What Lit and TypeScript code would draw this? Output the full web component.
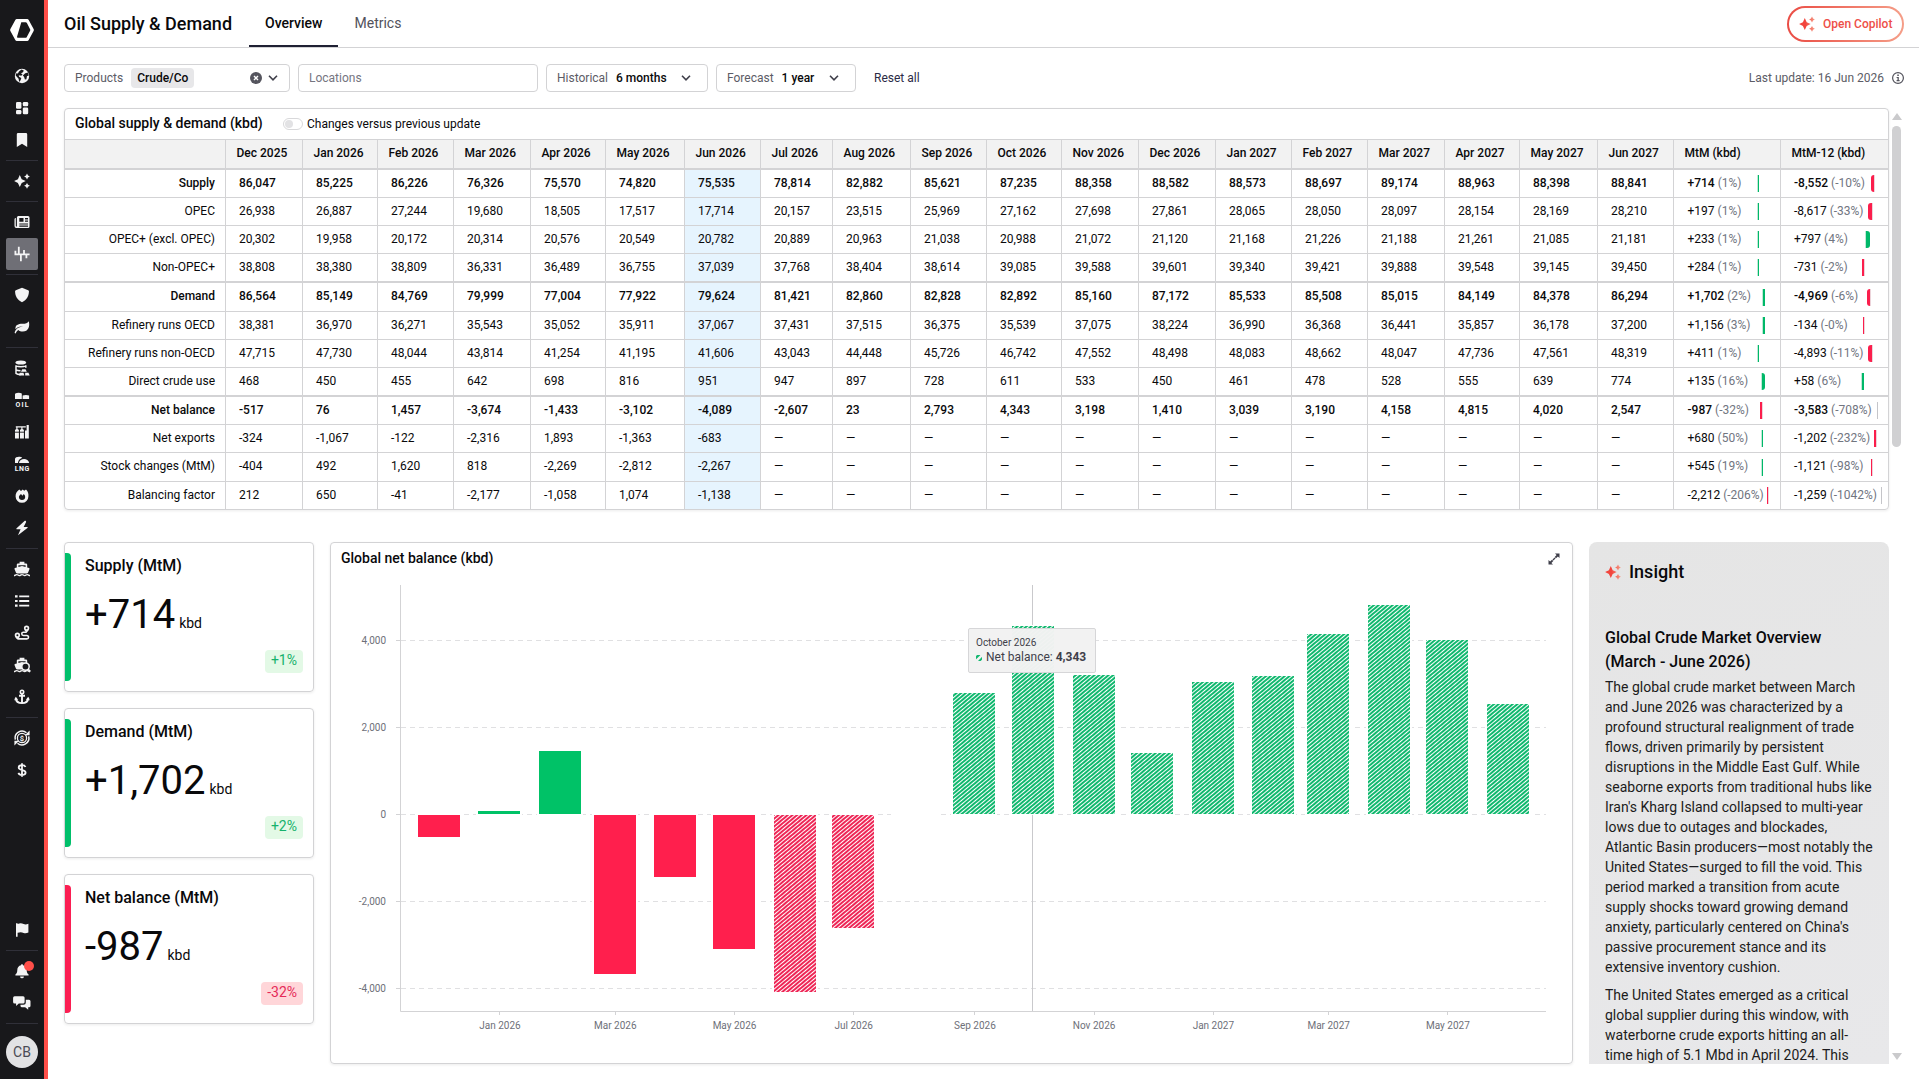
import { LitElement, html, css, svg, nothing, TemplateResult } from "lit";
import { customElement, property } from "lit/decorators.js";
import { classMap } from "lit/directives/class-map.js";
import { styleMap } from "lit/directives/style-map.js";

const SPARKLES = svg`
  <path d="M5.800 2.100 7.700 6.200 11.700 8.100 7.700 10 5.800 14.100 3.900 10 .1 8.100 3.900 6.200Z"/>
  <path d="M13 .6 14 2.500 15.900 3.500 14 4.500 13 6.400 12 4.500 10.100 3.500 12 2.500Z"/>
  <path d="M13 9.900 14 11.800 15.900 12.800 14 13.800 13 15.700 12 13.800 10.100 12.800 12 11.800Z"/>`;

const SHIP = svg`
  <path d="M5.6.8h4.8v1.6H12a1.2 1.2 0 0 1 1.2 1.2v2.8l1.9.7c.4.2.5.5.4.9l-1.4 3.4c-.3.7-.8 1.1-1.5 1.1H3.4c-.7 0-1.2-.4-1.5-1.1L.5 8c-.1-.4 0-.7.4-.9l1.9-.7V3.6A1.2 1.2 0 0 1 4 2.4h1.6Z"/>
  <path d="M4.4 4.2h7.2v1.7L8 4.9 4.4 5.9Z" fill="#18181b"/>
  <path d="M0 14.6c1.3 0 1.3-1 2.7-1s1.300 1 2.6 1 1.300-1 2.700-1 1.300 1 2.700 1 1.300-1 2.600-1 1.400 1 2.700 1" fill="none" stroke="currentColor" stroke-width="1.300"/>`;

const ICONS: Record<string, TemplateResult> = {
  sparkles: svg`${SPARKLES}`,
  globe: svg`<circle cx="8" cy="8" r="7.200"/><path fill="#18181b" d="M7.500 1.600 9.800 2.400 9 4.300 7 5.200 8.600 6.500 7.200 7.700 4.800 7.200 5 8.800 7.300 10 6.600 12.200 5.200 14 4.600 10.800 1.700 7.600 2.300 5.200 3.900 5.600 5 3.400ZM11.200 5.300l2.900-.8.6 3.300-1.700.2-.6 3.300-1.500.3-.9-2.800-1.200-1.300Z"/>`,
  grid: svg`<rect x="2" y="2" width="5.400" height="6.800" rx="1.300"/><rect x="2" y="10" width="5.400" height="4.200" rx="1.300"/><rect x="8.800" y="2" width="5.400" height="4.200" rx="1.300"/><rect x="8.800" y="7.400" width="5.400" height="6.800" rx="1.300"/>`,
  bookmark: svg`<path d="M2.800 2.200A1.300 1.300 0 0 1 4.100.9h7.800a1.300 1.300 0 0 1 1.300 1.300v12.900L8 11.800l-5.200 3.300Z"/>`,
  news: svg`<path fill-rule="evenodd" d="M4.800 2h9.200a1.500 1.500 0 0 1 1.500 1.500v9a1.500 1.500 0 0 1-1.500 1.500H2.400A1.900 1.900 0 0 1 .5 12.100V5.400c0-.8.500-1.400 1.300-1.400v8c0 .800 1.100.800 1.100 0V3.500C2.900 2.600 3.700 2 4.800 2Zm.5 2.100v3.700h4.200V4.100Zm5.700 0v1.300h3V4.100Zm0 2.500v1.200h3V6.600ZM5.300 9.400v1.200H14V9.400Zm0 2.200v1.100H14v-1.100Z"/>`,
  balance: svg`<path d="M1 8.400h14.600M1.400 4.800v4.400M4.800.8v8.400M6.900 8.400v6.800M10 4v4.400M12.400 8.400v3.900" fill="none" stroke="currentColor" stroke-width="1.800"/>`,
  shield: svg`<path d="M8 .8 14.200 3.200c.5.200.7.500.7 1C14.900 9 12.700 13 8 15.200 3.300 13 1.100 9 1.100 4.200c0-.5.200-.8.700-1Z"/>`,
  leaf: svg`<path d="M14.800 2.200c1.300 5-.3 10.300-6 10.300-1.900 0-3.400-.6-4.500-1.600-1.300 1-2.100 2-2.600 3.600L.6 14c.7-3.300 3.300-6 8.600-6.400C5.500 7 2.900 8.600 1.500 10.300 1 5.900 4.200 4.900 8.300 4.800 12 4.700 13.300 4 14.800 2.200Z"/>`,
  barrel: svg`<ellipse cx="6.800" cy="2.600" rx="5.300" ry="2"/><path d="M2 5.200v8.200c1 .9 3 1.300 5 1.200M11.800 5.200v2.600M2 5.900c2.500 1.200 7.400 1.200 9.800 0M2 9.900c1.200.7 3 .9 4.500.9" fill="none" stroke="currentColor" stroke-width="1.500"/><path d="M8.200 9.200h3.300l1.300 2.600H7ZM5.700 12.700h3.800l.8 2.700H4.800ZM11.200 12.700h3.200l1.300 2.700h-4.500Z"/>`,
  oil: svg`<path d="M1 1.800C3 .6 6 .6 7.800 1.600V7H1ZM8.600 3.600c2-.8 4.800-.8 6.500 0V7H8.600Z"/><text x="8" y="15" text-anchor="middle" font-size="7" font-weight="700" textLength="13">OIL</text>`,
  refinery: svg`<path d="M1 5.900c1-1.300 3-1.300 3.900 0v8.600H1ZM6 5.900c1-1.300 3-1.300 3.900 0v8.600H6ZM11 6.400h1.600V1.100h2.200v13.400H11Z"/><path d="M1.800 2.900h10M2.900 2.900v3M7.900 2.900v3" fill="none" stroke="currentColor" stroke-width="1.200"/><path d="M1 8.200h9.500" stroke="#18181b" stroke-width=".9"/>`,
  lng: svg`<path d="M1 7V3c0-2.500 5.500-3 7.200-1.300C5.500 2.800 4.200 4.500 4 7ZM5 7c.7-5.200 9.200-5.500 10.200 0Z"/><text x="8" y="15" text-anchor="middle" font-size="7" font-weight="700" textLength="14.500">LNG</text>`,
  flame: svg`<path fill-rule="evenodd" d="M5.300 1.600 7 3 8.700 1.500l1.500 1.300L12 1.600c2.100 2 2.700 4.500 2.400 6.900A6.400 6.400 0 0 1 8 14.800 6.400 6.400 0 0 1 1.600 8.500C1.400 5.800 2.900 3.400 5.300 1.600ZM8 12c1.900 0 3.200-1.200 3.200-3 0-1.200-.6-2.200-1.400-3L8.400 7.700 7 6C5.900 6.800 4.900 7.900 4.900 9c0 1.800 1.300 3 3.100 3Z"/>`,
  bolt: svg`<path d="M10.800.8 2.600 8.200c-.5.500-.2 1 .4 1h3.600L4 15.200l9.400-7.200c.5-.5.3-1.100-.4-1.100H9.600l2.500-4.800C12.400 1.200 11.500.4 10.800.8Z"/>`,
  ship: SHIP,
  list: svg`<path d="M1 2.200h2.600v2.200H1ZM1 6.900h2.600v2.200H1ZM1 11.600h2.600v2.200H1ZM5.200 2.400h10v1.800h-10ZM5.200 7.100h10v1.800h-10ZM5.200 11.800h10v1.800h-10Z"/>`,
  route: svg`<path fill-rule="evenodd" d="M12.600.6a2.700 2.700 0 0 1 2.700 2.700c0 1.500-1.600 3.400-2.700 4.400-1.100-1-2.700-2.900-2.700-4.400A2.700 2.700 0 0 1 12.600.6Zm0 1.700a1 1 0 1 0 0 2 1 1 0 0 0 0-2ZM3.400 7.500a2.700 2.700 0 0 1 2.700 2.700c0 1.500-1.600 3.400-2.700 4.400-1.100-1-2.700-2.900-2.700-4.400a2.700 2.700 0 0 1 2.700-2.700Zm0 1.700a1 1 0 1 0 0 2 1 1 0 0 0 0-2Z"/><path d="M12.600 7.200H9.400a1.600 1.600 0 0 0 0 3.300h3.400a1.700 1.700 0 0 1 0 3.400H3.600" fill="none" stroke="currentColor" stroke-width="1.600"/>`,
  shipsearch: svg`${SHIP}<circle cx="11.500" cy="9.600" r="3.700" fill="#18181b" stroke="currentColor" stroke-width="1.500"/><path d="m14 12.200 2.300 2.500" stroke="currentColor" stroke-width="1.800"/>`,
  anchor: svg`<path d="M8 4.800v9.700M5 6.700h6M1.700 8.800c.3 3.500 2.800 5.300 6.300 5.300s6-1.800 6.300-5.300" fill="none" stroke="currentColor" stroke-width="1.900"/><circle cx="8" cy="2.900" r="1.700" fill="none" stroke="currentColor" stroke-width="1.600"/><path d="M.2 11.200 1.700 7.800 4.200 10.700ZM15.800 11.200 14.300 7.800 11.800 10.700Z"/>`,
  exchange: svg`<circle cx="8" cy="8" r="4.600" fill="none" stroke="currentColor" stroke-width="1.300"/><path d="M1.300 9.600A6.900 6.900 0 0 1 12.500 2.800M14.700 6.400A6.900 6.900 0 0 1 3.500 13.200" fill="none" stroke="currentColor" stroke-width="1.500"/><path d="M15.600.6v4.600h-4.700ZM.4 15.400v-4.600h4.700Z"/><text x="8" y="10.700" text-anchor="middle" font-size="7.500" font-weight="700">$</text>`,
  dollar: svg`<path d="M8 1.200v13.600M11.500 5C11 3.800 9.800 3.200 8.100 3.200c-2 0-3.400.9-3.400 2.400 0 3.600 6.900 1.400 6.900 5 0 1.500-1.500 2.400-3.500 2.400-1.900 0-3.200-.8-3.700-2.100" fill="none" stroke="currentColor" stroke-width="1.800"/>`,
  flag: svg`<path d="M2 1.200h1.600V2c2.700-1 4.200-.7 6 .1 1.600.7 3 .5 4.800-.4v8.800c-1.800.9-3.200 1.100-4.800.4-1.800-.8-3.300-1.100-6-.1v4H2Z"/>`,
  bell: svg`<path d="M8 1.200c.6 0 1 .4 1 1 2.300.5 3.700 2.300 3.700 4.700 0 2.400.6 3.500 1.900 4.600v1H1.400v-1c1.300-1.100 1.900-2.200 1.900-4.600C3.300 4.500 4.700 2.700 7 2.200c0-.6.4-1 1-1ZM6.100 13.400h3.800a1.900 1.900 0 0 1-3.800 0Z"/>`,
  chat: svg`<path d="M.6 1.200h8.500a1.500 1.500 0 0 1 1.500 1.500V7a1.500 1.500 0 0 1-1.500 1.500H4.800L2.100 11V8.500H.6A1.500 1.500 0 0 1-.9 7V2.700A1.500 1.500 0 0 1 .6 1.200Z"/><path d="M11.800 4.700H15a1.500 1.500 0 0 1 1.500 1.500v4.600a1.500 1.500 0 0 1-1.500 1.500h-.8v2.500l-3-2.500H8a1.500 1.500 0 0 1-1.500-1.500V9.800h2.800a2.500 2.500 0 0 0 2.500-2.500Z"/>`,
};

@customElement("nav-icon")
class NavIcon extends LitElement {
  @property() name = "";
  @property({ type: Boolean, reflect: true }) active = false;
  @property({ type: Boolean }) badge = false;

  static styles = css`
    :host { display: flex; width: 32px; height: 32px; align-items: center; justify-content: center; position: relative; color: #f4f4f5; border-radius: 2px; }
    :host([active]) { background: #6f6f76; }
    svg { width: 16px; height: 16px; fill: currentColor; overflow: visible; font-family: Roboto, sans-serif; }
    .dot { position: absolute; left: 18px; top: 6px; width: 10px; height: 10px; border-radius: 50%; background: #ff4f49; }
  `;

  render() {
    return html`<svg viewBox="0 0 16 16">${ICONS[this.name]}</svg>${this.badge ? html`<i class="dot"></i>` : nothing}`;
  }
}

@customElement("side-nav")
class SideNav extends LitElement {
  static styles = css`
    :host { display: flex; flex-direction: column; align-items: center; width: 44px; height: 1079px; background: #18181b; border-right: 4px solid #ff4f49; flex: none; font-family: Roboto, sans-serif; }
    .logo { width: 24px; height: 22px; margin: 19px 0 19px; }
    .sep { width: 32px; height: 1px; margin: 4px 0; background: #303039; flex: none; }
    .space { flex: 1; }
    .avatar { width: 32px; height: 32px; border-radius: 50%; background: #e2e2e4; color: #4b4b55; font-size: 14px; line-height: 32px; text-align: center; margin: 8px 0 11px; }
  `;

  render() {
    const groups = [
      ["globe", "grid", "bookmark"],
      ["sparkles"],
      ["news", "balance"],
      ["shield", "leaf"],
      ["barrel", "oil", "refinery", "lng", "flame", "bolt"],
      ["ship", "list", "route", "shipsearch", "anchor"],
      ["exchange", "dollar"],
    ];
    return html`
      <svg class="logo" viewBox="0 0 24 22">
        <path d="M6.800 0h10.400a1.800 1.800 0 0 1 1.500.9l4.900 9.200a1.800 1.800 0 0 1 0 1.800l-4.900 9.200a1.800 1.800 0 0 1-1.500.9H6.800a1.800 1.800 0 0 1-1.500-.9L.4 11.900a1.800 1.800 0 0 1 0-1.800L5.300.9A1.800 1.800 0 0 1 6.800 0Z" fill="#fff"/>
        <path d="M11.300 3.200h4.300c.6 0 1 .2 1.300.8l3.200 6.200c.3.500.3 1 0 1.500l-3.300 6.200c-.3.600-.7.900-1.300.9H8.100c-.8 0-1.200-.6-1-1.300Z" fill="#18181b"/>
      </svg>
      ${groups.map((g, i) => html`
        ${i ? html`<div class="sep"></div>` : nothing}
        ${g.map((n) => html`<nav-icon .name=${n} ?active=${n === "balance"}></nav-icon>`)}`)}
      <div class="space"></div>
      <nav-icon name="flag"></nav-icon>
      <div class="sep"></div>
      <nav-icon name="bell" badge></nav-icon>
      <nav-icon name="chat"></nav-icon>
      <div class="sep"></div>
      <div class="avatar">CB</div>`;
  }
}

type Delta = { value: string; pct: string; color: "green" | "red" | "none"; at: number; w: number };
const d = (value: string, pct: string, color: Delta["color"], at: number, w: number): Delta => ({ value, pct, color, at, w });

type Row = { label: string; bold?: boolean; cells: string[]; mtm: Delta; yoy: Delta };
const r = (label: string, cells: string, mtm: Delta, yoy: Delta, bold = false): Row => ({ label, cells: cells.split(" "), mtm, yoy, bold });

const MONTHS = [
  "Dec 2025", "Jan 2026", "Feb 2026", "Mar 2026", "Apr 2026", "May 2026", "Jun 2026", "Jul 2026", "Aug 2026", "Sep 2026",
  "Oct 2026", "Nov 2026", "Dec 2026", "Jan 2027", "Feb 2027", "Mar 2027", "Apr 2027", "May 2027", "Jun 2027",
];

const ROWS: Row[] = [
  r("Supply", "86,047 85,225 86,226 76,326 75,570 74,820 75,535 78,814 82,882 85,621 87,235 88,358 88,582 88,573 88,697 89,174 88,963 88,398 88,841", d("+714", "(1%)", "green", 69, 2), d("-8,552", "(-10%)", "red", 77, 4), true),
  r("OPEC", "26,938 26,887 27,244 19,680 18,505 17,517 17,714 20,157 23,515 25,969 27,162 27,698 27,861 28,065 28,050 28,097 28,154 28,169 28,210", d("+197", "(1%)", "green", 69, 2), d("-8,617", "(-33%)", "red", 74, 5)),
  r("OPEC+ (excl. OPEC)", "20,302 19,958 20,172 20,314 20,576 20,549 20,782 20,889 20,963 21,038 20,988 21,072 21,120 21,168 21,226 21,188 21,261 21,085 21,181", d("+233", "(1%)", "green", 69, 2), d("+797", "(4%)", "green", 71, 5)),
  r("Non-OPEC+", "38,808 38,380 38,809 36,331 36,489 36,755 37,039 37,768 38,404 38,614 39,085 39,588 39,601 39,340 39,421 39,888 39,548 39,145 39,450", d("+284", "(1%)", "green", 69, 2), d("-731", "(-2%)", "red", 68, 3)),
  r("Demand", "86,564 85,149 84,769 79,999 77,004 77,922 79,624 81,421 82,860 82,828 82,892 85,160 87,172 85,533 85,508 85,015 84,149 84,378 86,294", d("+1,702", "(2%)", "green", 74, 3), d("-4,969", "(-6%)", "red", 73, 4), true),
  r("Refinery runs OECD", "38,381 36,970 36,271 35,543 35,052 35,911 37,067 37,431 37,515 36,375 35,539 37,075 38,224 36,990 36,368 36,441 35,857 36,178 37,200", d("+1,156", "(3%)", "green", 74, 3), d("-134", "(-0%)", "red", 69, 2)),
  r("Refinery runs non-OECD", "47,715 47,730 48,044 43,814 41,254 41,195 41,606 43,043 44,448 45,726 46,742 47,552 48,498 48,083 48,662 48,047 47,736 47,561 48,319", d("+411", "(1%)", "green", 69, 2), d("-4,893", "(-11%)", "red", 74, 5)),
  r("Direct crude use", "468 450 455 642 698 816 951 947 897 728 611 533 450 461 478 528 555 639 774", d("+135", "(16%)", "green", 73, 4), d("+58", "(6%)", "green", 67, 3)),
  r("Net balance", "-517 76 1,457 -3,674 -1,433 -3,102 -4,089 -2,607 23 2,793 4,343 3,198 1,410 3,039 3,190 4,158 4,815 4,020 2,547", d("-987", "(-32%)", "red", 72, 3), d("-3,583", "(-708%)", "none", 83, 1), true),
  r("Net exports", "-324 -1,067 -122 -2,316 1,893 -1,363 -683 — — — — — — — — — — — —", d("+680", "(50%)", "green", 73, 2), d("-1,202", "(-232%)", "red", 80, 3)),
  r("Stock changes (MtM)", "-404 492 1,620 818 -2,269 -2,812 -2,267 — — — — — — — — — — — —", d("+545", "(19%)", "green", 73, 2), d("-1,121", "(-98%)", "red", 77, 2)),
  r("Balancing factor", "212 650 -41 -2,177 -1,058 1,074 -1,138 — — — — — — — — — — — —", d("-2,212", "(-206%)", "red", 79, 2), d("-1,259", "(-1042%)", "none", 87, 1)),
];

@customElement("supply-table")
class SupplyTable extends LitElement {
  static styles = css`
    :host { display: block; box-sizing: border-box; height: 402px; border: 1px solid #d3d3d5; border-radius: 4px; overflow: hidden; box-shadow: 0 1px 3px rgba(0, 0, 0, .08); color: #09090b; flex: none; }
    .head { display: flex; align-items: center; height: 30px; padding-left: 10px; font-size: 12px; }
    .title { font-size: 14px; font-weight: 500; width: 208px; padding-bottom: 2px; }
    .toggle { width: 18px; height: 10px; border: 1px solid #d8d8da; border-radius: 6px; margin-right: 4px; display: flex; align-items: center; }
    .toggle i { width: 8px; height: 8px; border-radius: 50%; background: #e2e2e4; margin-left: 1px; }
    .grid { display: grid; font-size: 12px;
      grid-template-columns: 161px 77px 75px 76px 77px 75px 79px 76px 72px 78px 76px 75px 77px 77px 76px 76px 77px 75px 78px 76px 107px 108px;
      grid-template-rows: 31px 28px 28px 28px 29px 29px 28px 28px 29px 28px 28px 29px 28px; }
    .c { box-sizing: border-box; border-right: 1px solid #d3d3d5; border-bottom: 1px solid #d3d3d5; padding: 0 0 2px 13px; display: flex; align-items: center; white-space: nowrap; min-width: 0; }
    .h { background: #f2f2f2; font-weight: 500; padding-left: 10.5px; border-top: 1px solid #d3d3d5; }
    .thick { border-bottom-width: 2px; }
    .last { border-right: 0; }
    .label { justify-content: flex-end; padding: 0 10px 2px 0; }
    .mtm { padding-left: 13.5px; }
    .b { font-weight: 500; }
    .now { background: #e6f4fe; }
    .pct { color: #71757f; font-weight: 400; margin-left: 3px; }
    .txt { display: block; box-sizing: border-box; flex: none; }
    .bar { height: 17px; flex: none; box-sizing: border-box; border-left: 1px solid #bfe9d6; position: relative; top: 1px; }
    .bar.green { background: #00b869; border-radius: 0 3px 3px 0; }
    .bar.red { background: #fb1e4c; border-left: 0; border-right: 1px solid #ecd4da; border-radius: 3px 0 0 3px; }
    .bar.none { border-color: #c5c5c9; }
    .bar.thin { border-radius: 0; }
  `;

  delta(v: Delta) {
    return html`<span class="txt" style=${styleMap({ width: `${v.at}px` })}>${v.value}<span class="pct">${v.pct}</span></span>
      <i class=${classMap({ bar: true, [v.color]: true, thin: v.w <= 3 })} style=${styleMap({ width: `${v.w}px` })}></i>`;
  }

  render() {
    return html`
      <div class="head"><span class="title">Global supply &amp; demand (kbd)</span><span class="toggle"><i></i></span>Changes versus previous update</div>
      <div class="grid">
        ${["", ...MONTHS, "MtM (kbd)", "MtM-12 (kbd)"].map((m, i) => html`<div class=${classMap({ c: true, h: true, thick: true, last: i === 21 })}>${m}</div>`)}
        ${ROWS.map((row, ri) => {
          const base = { c: true, b: !!row.bold, thick: ri === 3 || ri === 7 };
          return html`<div class=${classMap({ ...base, label: true })}>${row.label}</div>
            ${row.cells.map((v, i) => html`<div class=${classMap({ ...base, now: i === 6 })}>${v}</div>`)}
            <div class=${classMap({ ...base, mtm: true })}>${this.delta(row.mtm)}</div>
            <div class=${classMap({ ...base, last: true })}>${this.delta(row.yoy)}</div>`;
        })}
      </div>`;
  }
}

@customElement("kpi-card")
class KpiCard extends LitElement {
  @property() label = "";
  @property() value = "";
  @property() change = "";
  @property({ type: Boolean, reflect: true }) down = false;

  static styles = css`
    :host { display: flex; box-sizing: border-box; width: 250px; height: 150px; border: 1px solid #d3d3d5; border-radius: 4px; box-shadow: 0 1px 3px rgba(0, 0, 0, .08); color: #09090b; padding: 10px 10px 18px 0; --accent: #00bf6a; --soft: #e3f9e6; --ink: #16b26c; }
    :host([down]) { --accent: #fb1e52; --soft: #ffd6d9; --ink: #e52a58; }
    .stripe { width: 6px; height: 128px; background: var(--accent); border-radius: 0 4px 4px 0; }
    .body { flex: 1; display: flex; flex-direction: column; padding: 1px 0 0 14px; }
    .label { font-size: 16px; font-weight: 500; line-height: 24px; }
    .value { font-size: 40px; line-height: 48px; height: 48px; margin-top: 13px; }
    .unit { font-size: 14px; margin-left: 4px; }
    .change { align-self: flex-end; margin-top: 11px; background: var(--soft); color: var(--ink); font-size: 14px; line-height: 21px; padding: 0 6px 2px; border-radius: 4px; }
  `;

  render() {
    return html`<div class="stripe"></div><div class="body"><div class="label">${this.label}</div>
      <div class="value">${this.value}<span class="unit">kbd</span></div><div class="change">${this.change}</div></div>`;
  }
}

/* Plot coordinates are relative to the card: month starts are placed on a day scale. */
const BARS = [-517, 76, 1457, -3674, -1433, -3102, -4089, -2607, 23, 2793, 4343, 3198, 1410, 3039, 3190, 4158, 4815, 4020, 2547];
const FIRST_FORECAST = 6;
const ZERO = 271.5;
const PX_PER_UNIT = 87 / 2000;
const START = Date.UTC(2025, 11, 1);
const centerOf = (i: number) => 107.9 + ((Date.UTC(2025, 11 + i, 1) - START) / 86400000) * 1.9545;

@customElement("balance-chart")
class BalanceChart extends LitElement {
  static styles = css`
    :host { display: block; position: relative; box-sizing: border-box; width: 1243px; height: 522px; border: 1px solid #d3d3d5; border-radius: 4px; box-shadow: 0 1px 3px rgba(0, 0, 0, .08); }
    .head { display: flex; justify-content: space-between; align-items: center; box-sizing: border-box; height: 31px; padding: 0 12px 0 10px; font-size: 14px; font-weight: 500; color: #09090b; }
    .head span { padding-bottom: 2px; }
    .expand { width: 12px; height: 12px; }
    .plot { display: block; margin-top: -31px; width: 1241px; height: 520px; font-size: 10px; font-family: Roboto, sans-serif; }
    .axis { fill: #6e7079; }
    .tip { position: absolute; left: 637px; top: 85px; box-sizing: border-box; width: 128px; height: 45px; padding: 7px 7px 0; background: rgba(242, 242, 242, .98); border: 1px solid #d6d6d8; border-radius: 2px; color: #3f3f4a; font-size: 12px; line-height: 15px; white-space: nowrap; }
    .when { font-size: 10px; line-height: 14px; }
    .line { display: flex; align-items: center; }
    .dot { width: 6px; height: 6px; margin-right: 4px; }
    b { font-weight: 700; margin-left: 3px; }
  `;

  bar(v: number, i: number) {
    const x = Math.round(centerOf(i) - 21);
    const up = v > 0;
    const tip = Math.round(ZERO - v * PX_PER_UNIT);
    const y = up ? tip : 272;
    const h = up ? 271 - tip : tip - 272;
    const paint = i < FIRST_FORECAST ? (up ? "#00c267" : "#ff1f4d") : up ? "url(#hg)" : "url(#hr)";
    return svg`<rect x=${x - 2} y=${y - 1} width="46" height=${h + 2} fill="#fff"/>
      ${h > 1 ? svg`<rect x=${x} y=${y} width="42" height=${h} fill=${paint}/>` : nothing}`;
  }

  render() {
    return html`
      <div class="head"><span>Global net balance (kbd)</span>
        <svg class="expand" viewBox="0 0 12 12"><path d="M7 .5h4.500V5L9.900 3.400 8 5.300 6.700 4 8.600 2.100ZM5 11.500H.5V7l1.600 1.600L4 6.700 5.300 8 3.400 9.900ZM4.500 6.600l2.100-2.100.9.9-2.100 2.100Z" fill="#3f3f4a"/></svg></div>
      <svg class="plot" viewBox="0 0 1241 520">
        <defs>
          <pattern id="hg" width="6" height="3" patternUnits="userSpaceOnUse" patternTransform="rotate(-40)"><rect width="6" height="3" fill="#fff"/><rect width="6" height="2" fill="#10b86e"/></pattern>
          <pattern id="hr" width="6" height="3" patternUnits="userSpaceOnUse" patternTransform="rotate(-40)"><rect width="6" height="3" fill="#fff"/><rect width="6" height="2" fill="#ee2656"/></pattern>
        </defs>
        ${[4000, 2000, 0, -2000, -4000].map((v) => {
          const y = ZERO - v * PX_PER_UNIT;
          return svg`<path d="M70 ${y}H1215" stroke="#e0e0e2" stroke-dasharray="5 4"/><path d="M65 ${y}h5" stroke="#d3d3d5"/>
            <text class="axis" x="55" y=${y + 3} text-anchor="end">${v.toLocaleString("en-US")}</text>`;
        })}
        <path d="M69.500 42V468.500H1215" fill="none" stroke="#d3d3d5"/>
        ${BARS.map((v, i) => i % 2 === 1 && i < 19 ? svg`<path d="M${Math.round(centerOf(i)) + 0.5} 468v4" stroke="#d3d3d5"/>
          <text class="axis" x=${centerOf(i) + 0.5} y="486" text-anchor="middle">${MONTHS[i]}</text>` : nothing)}
        <path d="M701.500 42V468" stroke="#c9c9cc"/>
        ${BARS.map((v, i) => this.bar(v, i))}
      </svg>
      <div class="tip"><div class="when">October 2026</div>
        <div class="line"><svg class="dot" viewBox="0 0 6 6"><path d="M.1 4.300A3 3 0 0 1 4.300.2ZM2 6 5.900 1.900A3 3 0 0 1 2 6Z" fill="#12b870"/></svg>Net balance: <b>4,343</b></div></div>`;
  }
}

const sparkle = (cls: string, id: string) => html`<svg class=${cls} viewBox="0 0 16 16">
  <defs><linearGradient id=${id} gradientUnits="userSpaceOnUse" x1="0" x2="16" y1="0" y2="0"><stop offset="0.400" stop-color="#f2453d"/><stop offset="1" stop-color="#f59a85"/></linearGradient></defs>
  <g fill="url(#${id})">${SPARKLES}</g></svg>`;

const chevron = html`<svg class="chev" viewBox="0 0 10 6"><path d="m1 .8 4 4 4-4" fill="none" stroke="#3f3f4a" stroke-width="1.600"/></svg>`;

@customElement("app-root")
class AppRoot extends LitElement {
  static styles = css`
    :host { display: flex; width: 1919px; height: 1079px; overflow: hidden; background: #fff; font-family: Roboto, sans-serif; font-size: 12px; color: #09090b; }
    .main { flex: 1; display: flex; flex-direction: column; min-width: 0; }
    .top { display: flex; align-items: stretch; height: 47px; border-bottom: 1px solid #d3d3d5; padding: 0 15px 0 16px; flex: none; }
    .title { font-size: 18px; font-weight: 500; line-height: 47px; width: 185px; }
    .tab { font-size: 14px; line-height: 46px; padding: 0 16px; box-sizing: border-box; color: #52525b; }
    .tab.on { font-weight: 500; color: #09090b; border-bottom: 2px solid #1f2033; }
    .copilot { margin: 6px 0 0 auto; box-sizing: border-box; width: 117px; height: 36px; border: 2px solid transparent; border-radius: 18px; background: linear-gradient(#fff, #fff) padding-box, linear-gradient(90deg, #ea4c44, #f59e88) border-box; color: #ee4f48; font-weight: 500; display: flex; align-items: center; padding-left: 10px; gap: 8px; white-space: nowrap; }
    .spark { width: 16px; height: 16px; flex: none; overflow: visible; }
    .filters { display: flex; align-items: center; height: 28px; margin: 16px 15px 16px 16px; flex: none; gap: 8px; }
    .field { box-sizing: border-box; height: 28px; border: 1px solid #d3d3d5; border-radius: 4px; display: flex; align-items: center; padding: 0 10px; color: #5c5c66; white-space: nowrap; }
    .field b { font-weight: 500; color: #09090b; margin-left: 8px; }
    .f1 { width: 226px; }
    .f2 { width: 240px; color: #75757f; }
    .f3 { width: 162px; }
    .f4 { width: 140px; }
    .field .chip { background: #e7e7e9; border-radius: 4px; line-height: 20px; padding: 0 6px; }
    .clear { width: 12px; height: 12px; margin-left: auto; margin-right: 6px; }
    .chev { width: 10px; height: 6px; margin: 0 6px 0 auto; }
    .f1 .chev { margin: 0 1px 0 0; }
    .reset { margin-left: 10px; color: #2b2b45; }
    .updated { margin-left: auto; color: #5c5c66; display: flex; align-items: center; gap: 8px; }
    .info { width: 12px; height: 12px; overflow: visible; }
    .scroll { display: flex; padding-left: 16px; height: 956px; }
    .content { width: 1825px; display: flex; flex-direction: column; gap: 32px; overflow: visible; }
    .row { display: flex; gap: 16px; height: 522px; }
    .kpis { display: flex; flex-direction: column; gap: 16px; }
    .insight { box-sizing: border-box; width: 300px; height: 522px; overflow: hidden; border-radius: 8px 8px 0 0; background: linear-gradient(160deg, #e5e5e5, #e8e8ea); padding: 18px 16px 0; font-size: 14px; line-height: 20px; color: #1c1c20; }
    .insight h2 { display: flex; align-items: center; gap: 8px; margin: 0; font-size: 18px; font-weight: 500; line-height: 24px; color: #09090b; }
    .insight h3 { margin: 42px 0 3px; font-size: 16px; font-weight: 500; line-height: 24px; color: #09090b; }
    .insight p { margin: 0 0 8px; }
    .bar { width: 9px; margin-left: 3px; display: flex; flex-direction: column; align-items: center; }
    .up { border: 5px solid transparent; border-top: 0; border-bottom: 7px solid #cacacc; margin: 5px 0 6px; }
    .thumb { width: 9px; height: 321px; border-radius: 5px; background: #d0d0d2; }
    .down { border: 5px solid transparent; border-bottom: 0; border-top: 7px solid #cacacc; margin: auto 0 4px; }
  `;

  render() {
    return html`
      <side-nav></side-nav>
      <div class="main">
        <div class="top">
          <div class="title">Oil Supply &amp; Demand</div>
          <div class="tab on">Overview</div>
          <div class="tab">Metrics</div>
          <div class="copilot">${sparkle("spark", "g1")}Open Copilot</div>
        </div>
        <div class="filters">
          <div class="field f1">Products<b class="chip">Crude/Co</b>
            <svg class="clear" viewBox="0 0 12 12"><circle cx="6" cy="6" r="6" fill="#55555e"/><path d="m4 4 4 4M8 4 4 8" stroke="#fff" stroke-width="1.400"/></svg>${chevron}</div>
          <div class="field f2">Locations</div>
          <div class="field f3">Historical<b>6 months</b>${chevron}</div>
          <div class="field f4">Forecast<b>1 year</b>${chevron}</div>
          <div class="reset">Reset all</div>
          <div class="updated">Last update: 16 Jun 2026
            <svg class="info" viewBox="0 0 12 12"><circle cx="6" cy="6" r="5.400" fill="none" stroke="#52525b" stroke-width="1.200"/><path d="M5.300 2.600h1.500v1.300H5.300ZM4.600 5h2.200v3.100h.8v1.100h-3V8.100h.9V6.100h-.9Z" fill="#52525b"/></svg></div>
        </div>
        <div class="scroll">
          <div class="content">
            <supply-table></supply-table>
            <div class="row">
              <div class="kpis">
                <kpi-card label="Supply (MtM)" value="+714" change="+1%"></kpi-card>
                <kpi-card label="Demand (MtM)" value="+1,702" change="+2%"></kpi-card>
                <kpi-card label="Net balance (MtM)" value="-987" change="-32%" down></kpi-card>
              </div>
              <balance-chart></balance-chart>
              <div class="insight">
                <h2>${sparkle("spark", "g2")}Insight</h2>
                <h3>Global Crude Market Overview (March - June 2026)</h3>
                <p>The global crude market between March and June 2026 was characterized by a profound structural realignment of trade flows, driven primarily by persistent disruptions in the Middle East Gulf. While seaborne exports from traditional hubs like Iran's Kharg Island collapsed to multi-year lows due to outages and blockades, Atlantic Basin producers—most notably the United States—surged to fill the void. This period marked a transition from acute supply shocks toward growing demand anxiety, particularly centered on China's passive procurement stance and its extensive inventory cushion.</p>
                <p>The United States emerged as a critical global supplier during this window, with waterborne crude exports hitting an all-time high of 5.1 Mbd in April 2024. This</p>
              </div>
            </div>
          </div>
          <div class="bar"><i class="up"></i><i class="thumb"></i><i class="down"></i></div>
        </div>
      </div>`;
  }
}
